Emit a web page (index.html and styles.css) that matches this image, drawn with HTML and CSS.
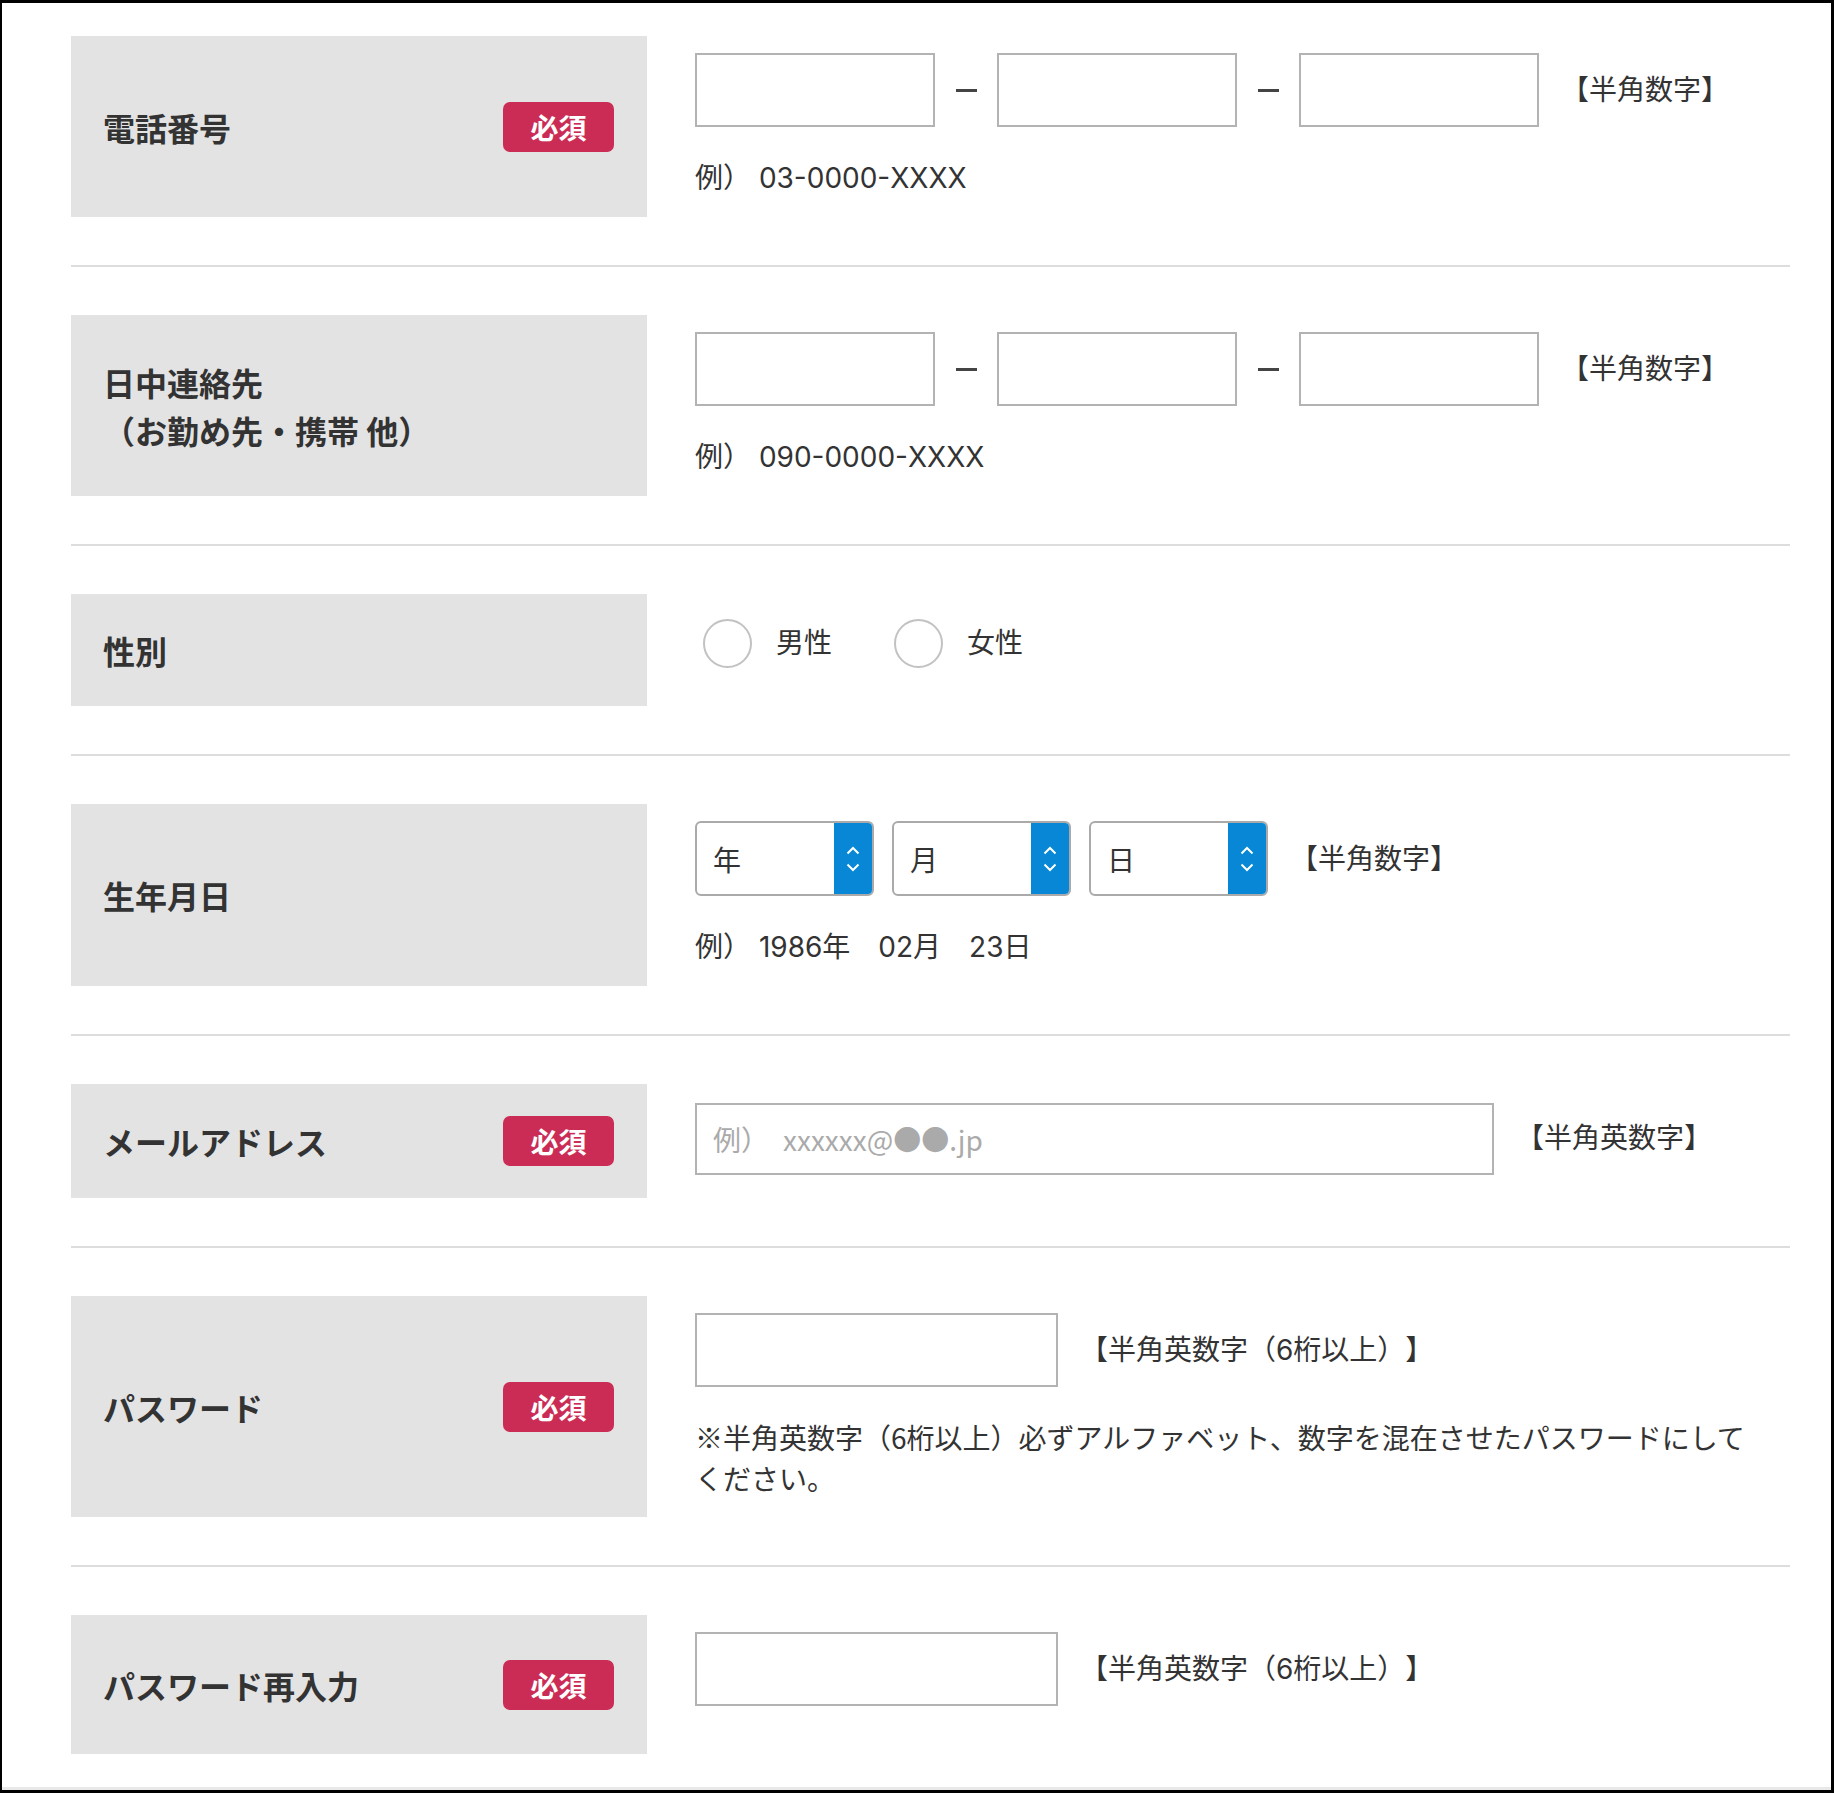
FILE: index.html
```html
<!DOCTYPE html>
<html lang="ja">
<head>
<meta charset="utf-8">
<title>会員登録フォーム</title>
<link rel="stylesheet" href="styles.css">
</head>
<body>
<div class="frame">
  <form class="form">
    <div class="row">
      <div class="label"><span class="label-text">電話番号</span><span class="badge">必須</span></div>
      <div class="field">
        <div class="line">
          <input class="text tel" type="text"><span class="dash"></span><input class="text tel" type="text"><span class="dash"></span><input class="text tel" type="text"><span class="hint">【半角数字】</span>
        </div>
        <p class="example">例） 03-0000-XXXX</p>
      </div>
    </div>

    <div class="row">
      <div class="label"><span class="label-text">日中連絡先<br>（お勤め先・携帯 他）</span></div>
      <div class="field">
        <div class="line">
          <input class="text tel" type="text"><span class="dash"></span><input class="text tel" type="text"><span class="dash"></span><input class="text tel" type="text"><span class="hint">【半角数字】</span>
        </div>
        <p class="example">例） 090-0000-XXXX</p>
      </div>
    </div>

    <div class="row">
      <div class="label"><span class="label-text">性別</span></div>
      <div class="field">
        <div class="radios">
          <label class="radio-item"><input class="radio" type="radio" name="sex"><span>男性</span></label>
          <label class="radio-item"><input class="radio" type="radio" name="sex"><span>女性</span></label>
        </div>
      </div>
    </div>

    <div class="row">
      <div class="label"><span class="label-text">生年月日</span></div>
      <div class="field">
        <div class="line">
          <div class="selects">
            <div class="select"><span class="select-value">年</span><span class="select-arrow"><svg width="14" height="26" viewBox="0 0 14 26"><polyline points="1.5,7.5 7,2 12.5,7.5" fill="none" stroke="#fff" stroke-width="2"/><polyline points="1.5,18.5 7,24 12.5,18.5" fill="none" stroke="#fff" stroke-width="2"/></svg></span></div>
            <div class="select"><span class="select-value">月</span><span class="select-arrow"><svg width="14" height="26" viewBox="0 0 14 26"><polyline points="1.5,7.5 7,2 12.5,7.5" fill="none" stroke="#fff" stroke-width="2"/><polyline points="1.5,18.5 7,24 12.5,18.5" fill="none" stroke="#fff" stroke-width="2"/></svg></span></div>
            <div class="select"><span class="select-value">日</span><span class="select-arrow"><svg width="14" height="26" viewBox="0 0 14 26"><polyline points="1.5,7.5 7,2 12.5,7.5" fill="none" stroke="#fff" stroke-width="2"/><polyline points="1.5,18.5 7,24 12.5,18.5" fill="none" stroke="#fff" stroke-width="2"/></svg></span></div>
          </div>
          <span class="hint">【半角数字】</span>
        </div>
        <p class="example">例） 1986年　02月　23日</p>
      </div>
    </div>

    <div class="row">
      <div class="label"><span class="label-text">メールアドレス</span><span class="badge">必須</span></div>
      <div class="field">
        <div class="line">
          <input class="text email" type="text" placeholder="例）&#8194;xxxxxx@●●.jp"><span class="hint">【半角英数字】</span>
        </div>
      </div>
    </div>

    <div class="row">
      <div class="label"><span class="label-text">パスワード</span><span class="badge">必須</span></div>
      <div class="field">
        <div class="line">
          <input class="text pw" type="password"><span class="hint">【半角英数字（6桁以上）】</span>
        </div>
        <p class="note">※半角英数字（6桁以上）必ずアルファベット、数字を混在させたパスワードにしてください。</p>
      </div>
    </div>

    <div class="row">
      <div class="label"><span class="label-text">パスワード再入力</span><span class="badge">必須</span></div>
      <div class="field field--last">
        <div class="line">
          <input class="text pw" type="password"><span class="hint">【半角英数字（6桁以上）】</span>
        </div>
      </div>
    </div>
  </form>
</div>
</body>
</html>
```

FILE: styles.css
```css
* {
  box-sizing: border-box;
}

html,
body {
  margin: 0;
  padding: 0;
}

body {
  font-family: "Inter", "Noto Sans CJK JP", "Noto Sans", sans-serif;
  color: #333;
  background: #fff;
  text-spacing-trim: space-all;
}

.frame {
  width: 1834px;
  height: 1793px;
  border: 3px solid #000;
  border-left-width: 2px;
  overflow: hidden;
  display: flex;
  flex-direction: column;
}

.form {
  flex: 1;
  min-height: 0;
  overflow: hidden;
  margin: 0;
  padding: 33px 41px 0 69px;
  border-bottom: 3px solid #e8e8e8;
}

.row {
  display: flex;
  padding: 48px 0;
  border-bottom: 2px solid #dddddd;
}

.row:first-child {
  padding-top: 0;
}

.label {
  width: 576px;
  flex-shrink: 0;
  background: #e3e3e3;
  padding: 32px 33px 32px 32px;
  display: flex;
  align-items: center;
  justify-content: space-between;
}

.label-text {
  font-family: "Noto Sans CJK JP", sans-serif;
  font-size: 32px;
  font-weight: 700;
  line-height: 48px;
  color: #333;
}

.badge {
  width: 111px;
  height: 50px;
  border-radius: 7px;
  background: #cb2c55;
  color: #fff;
  font-family: "Noto Sans CJK JP", sans-serif;
  font-size: 28px;
  font-weight: 700;
  line-height: 1;
  display: flex;
  align-items: center;
  justify-content: center;
}

.field {
  flex: 1;
  margin-left: 48px;
  padding: 17px 0 18px;
}

.field--last {
  padding-bottom: 48px;
}

.line {
  display: flex;
  align-items: center;
}

.text {
  height: 74px;
  margin: 0;
  padding: 0 16px;
  border: 2px solid #b3b3b3;
  border-radius: 0;
  background: #fff;
  font-family: inherit;
  font-size: 28px;
  color: #333;
  outline: none;
}

.tel {
  width: 240px;
}

.email {
  width: 799px;
  height: 72px;
  margin-top: 2px;
  font-family: "Noto Sans CJK JP", sans-serif;
}

.email::placeholder {
  color: #aaa;
}

.pw {
  width: 363px;
}

.dash {
  width: 62px;
  display: flex;
  justify-content: center;
}

.dash::before {
  content: "";
  width: 21px;
  height: 3px;
  background: #444;
}

.hint {
  margin-left: 22px;
  font-size: 28px;
  line-height: 42px;
  white-space: nowrap;
}

.example,
.note {
  margin: 30px 0 0;
  font-size: 28px;
  line-height: 42px;
}

.note {
  max-width: 1068px;
  font-family: "Noto Sans CJK JP", sans-serif;
  line-height: 41px;
}

.radios {
  height: 64px;
  padding-left: 8px;
  display: flex;
  align-items: center;
}

.radio-item {
  display: flex;
  align-items: center;
  gap: 24px;
  margin-right: 62px;
  font-size: 28px;
  line-height: 42px;
}

.radio {
  appearance: none;
  -webkit-appearance: none;
  width: 49px;
  height: 49px;
  margin: 0;
  border: 2px solid #c2c2c2;
  border-radius: 50%;
  background: #fff;
}

.selects {
  display: flex;
  gap: 18px;
}

.select {
  width: 179px;
  height: 75px;
  border: 2px solid #aaa;
  border-radius: 6px;
  overflow: hidden;
  display: flex;
  background: #fff;
}

.select-value {
  flex: 1;
  display: flex;
  align-items: center;
  padding-left: 16px;
  font-size: 28px;
}

.select-arrow {
  width: 38px;
  background: #0787d5;
  display: flex;
  align-items: center;
  justify-content: center;
}
```
